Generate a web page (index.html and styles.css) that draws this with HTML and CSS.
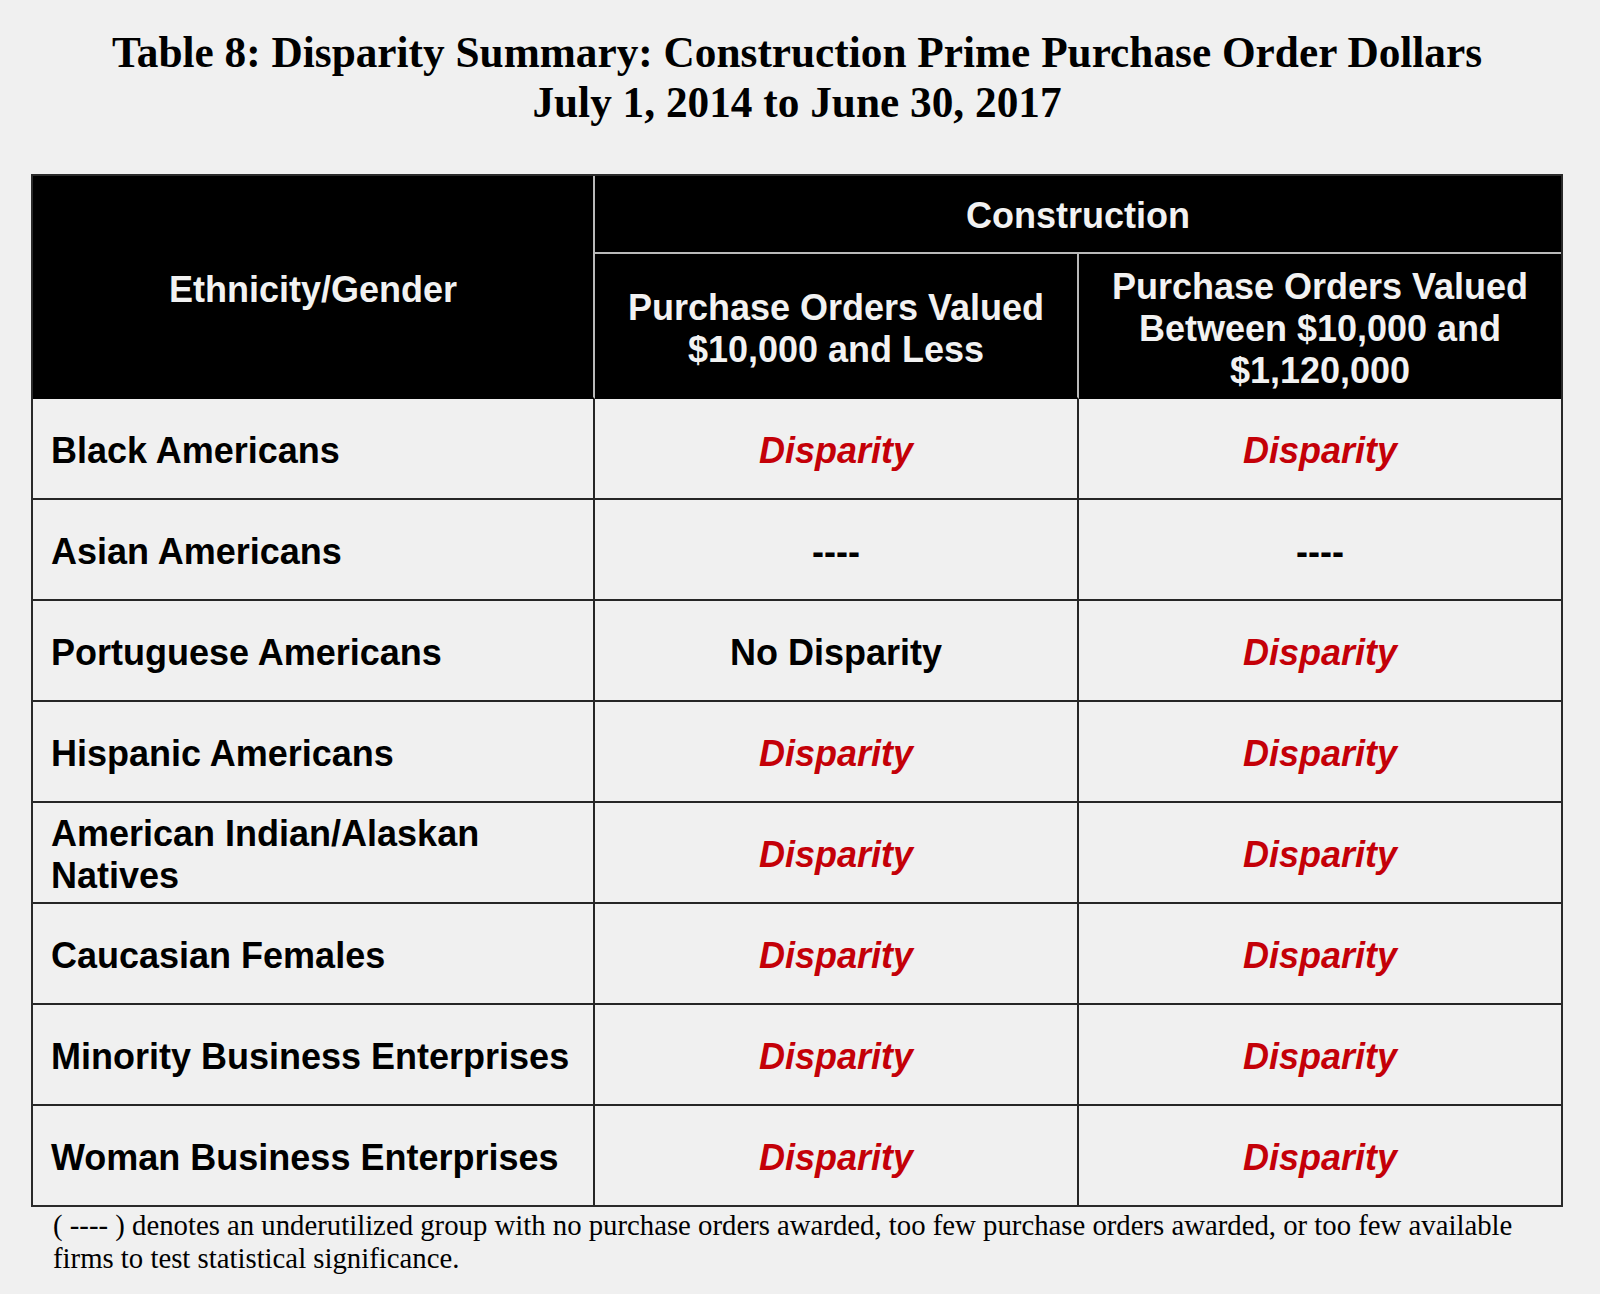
FILE: index.html
```html
<!DOCTYPE html>
<html lang="en">
<head>
<meta charset="utf-8">
<title>Table 8: Disparity Summary</title>
<link rel="stylesheet" href="styles.css">
</head>
<body>
<div class="page">
  <h1 class="title">Table 8: Disparity Summary: Construction Prime Purchase Order Dollars<br>July 1, 2014 to June 30, 2017</h1>
  <div class="table">
    <div class="th th-eth">Ethnicity/Gender</div>
    <div class="th th-group">Construction</div>
    <div class="th th-sub">Purchase Orders Valued<br>$10,000 and Less</div>
    <div class="th th-sub th-last">Purchase Orders Valued<br>Between $10,000 and<br>$1,120,000</div>

    <div class="td label">Black Americans</div>
    <div class="td val red">Disparity</div>
    <div class="td val red last">Disparity</div>

    <div class="td label">Asian Americans</div>
    <div class="td val">----</div>
    <div class="td val last">----</div>

    <div class="td label">Portuguese Americans</div>
    <div class="td val">No Disparity</div>
    <div class="td val red last">Disparity</div>

    <div class="td label">Hispanic Americans</div>
    <div class="td val red">Disparity</div>
    <div class="td val red last">Disparity</div>

    <div class="td label">American Indian/Alaskan<br>Natives</div>
    <div class="td val red">Disparity</div>
    <div class="td val red last">Disparity</div>

    <div class="td label">Caucasian Females</div>
    <div class="td val red">Disparity</div>
    <div class="td val red last">Disparity</div>

    <div class="td label">Minority Business Enterprises</div>
    <div class="td val red">Disparity</div>
    <div class="td val red last">Disparity</div>

    <div class="td label bottom">Woman Business Enterprises</div>
    <div class="td val red bottom">Disparity</div>
    <div class="td val red last bottom">Disparity</div>
  </div>
  <p class="note">( ---- ) denotes an underutilized group with no purchase orders awarded, too few purchase orders awarded, or too few available<br>firms to test statistical significance.</p>
</div>
</body>
</html>
```

FILE: styles.css
```css
html, body {
  margin: 0;
  padding: 0;
  background: #f0f0f0;
}

.page {
  width: 1600px;
  padding-top: 27px;
}

.title {
  margin: 0 0 47px 0;
  width: 1594px;
  font-family: "Liberation Serif", "Times New Roman", serif;
  font-weight: bold;
  font-size: 43.3px;
  line-height: 50px;
  text-align: center;
  color: #000;
}

.table {
  margin-left: 31px;
  width: 1528px;
  border: 2px solid #2a2a2a;
  display: grid;
  grid-template-columns: 562px 484px 482px;
  grid-template-rows: 78px 145px repeat(7, 101px) 99px;
  font-family: "Liberation Sans", Arial, sans-serif;
  font-weight: bold;
  font-size: 36px;
  line-height: 42px;
}

.th {
  background: #000;
  color: #f2f2f2;
  display: flex;
  align-items: center;
  justify-content: center;
  text-align: center;
  box-sizing: border-box;
  padding-top: 6px;
}

.th-eth {
  grid-row: 1 / span 2;
  border-right: 2px solid #b9b9b9;
  border-bottom: 2px solid #000;
}

.th-group {
  grid-column: 2 / span 2;
  border-bottom: 2px solid #b9b9b9;
  padding-top: 3px;
}

.th-sub {
  border-right: 2px solid #b9b9b9;
  border-bottom: 2px solid #000;
}

.th-last {
  border-right: none;
}

.td {
  display: flex;
  align-items: center;
  box-sizing: border-box;
  border-right: 2px solid #262626;
  border-bottom: 2px solid #262626;
  color: #000;
  padding-top: 5px;
}

.td.last {
  border-right: none;
}

.td.bottom {
  border-bottom: none;
}

.label {
  padding-left: 18px;
}

.val {
  justify-content: center;
  text-align: center;
}

.red {
  color: #c40008;
  font-style: italic;
}

.note {
  margin: 2px 0 0 53px;
  font-family: "Liberation Serif", "Times New Roman", serif;
  font-size: 28.75px;
  line-height: 33px;
  color: #000;
  white-space: nowrap;
}
```
